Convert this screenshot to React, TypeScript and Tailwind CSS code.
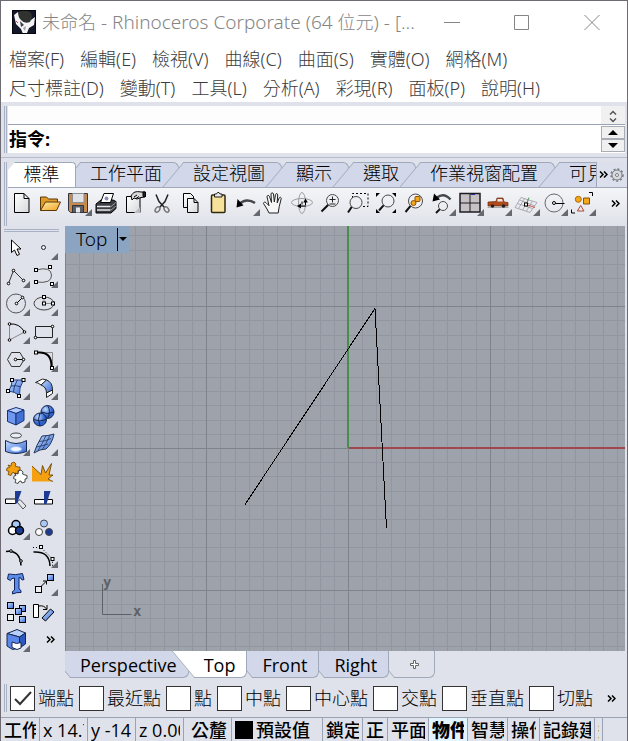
import React, { useState } from "react";

const STACK = "font-['Open_Sans','Noto_Sans_CJK_TC',sans-serif]";

const Tri = () => <path d="M28 20v7h-7z" fill="#66696f" />;

function Pt({ x, y, sq = false }: { x: number; y: number; sq?: boolean }) {
  return sq ? (
    <rect x={x - 1.5} y={y - 1.5} width="3" height="3" fill="#fff" stroke="#000" />
  ) : (
    <circle cx={x} cy={y} r="1.3" fill="#fff" stroke="#000" />
  );
}

function Lens({ x, y, r, hx, hy }: { x: number; y: number; r: number; hx: number; hy: number }) {
  const k = r * 0.7;
  return (
    <g>
      <path d={`M${x - k} ${y + k}L${hx} ${hy}`} stroke="#111" strokeWidth="2" />
      <circle cx={x} cy={y} r={r} fill="#eef0f4" fillOpacity=".6" stroke="#4a4a4a" />
    </g>
  );
}

function Chip({ x, y, fill = "url(#blue)" }: { x: number; y: number; fill?: string }) {
  return <rect x={x} y={y} width="6" height="6" fill={fill} stroke="#000" />;
}

type Tool = { name: string; art: React.ReactNode; more?: boolean };

const toolbar: Tool[] = [
  { name: "新增", art: <path d="M6.5 4.5h9.500l5 5v14h-14.500zM16 4.500v5h5" fill="url(#paper)" stroke="#000" /> },
  {
    name: "開啟",
    art: (
      <g stroke="#5a3808" strokeLinejoin="round">
        <path d="M4.500 21.500v-13.500h6l2 2h9v4" fill="#e09a28" />
        <path d="M4.500 21.500l5-8.500h15l-4 8.500z" fill="url(#gold)" />
      </g>
    ),
  },
  {
    name: "儲存",
    more: true,
    art: (
      <g stroke="#30343c">
        <path d="M4.500 4.500h19v19h-17l-2-2z" fill="#c68a4c" />
        <path d="M8.500 4.500h11.500v9h-11.500z" fill="#dfe2e6" stroke="#8a8d92" />
        <path d="M8.500 16.500h11v7h-11z" fill="#5a5e66" />
        <path d="M12 18.500h4v5h-4z" fill="#e6e8ea" stroke="none" />
      </g>
    ),
  },
  {
    name: "列印",
    art: (
      <g stroke="#000" strokeLinejoin="round">
        <path d="M4 15l5-4h12l3 1.500v7l-5 4.500h-15z" fill="#3a3d43" />
        <path d="M5 17.500h13.500M5 21h13.500" stroke="#e8e8e8" fill="none" strokeWidth="1.500" />
        <path d="M19 17.500l5-4M19 21l5-4" stroke="#999" fill="none" />
        <path d="M8.500 13.500l3.500-9h9.500l-3 9z" fill="#fff" />
        <circle cx="14.500" cy="9.500" r="2" fill="#8b8fb0" stroke="none" />
      </g>
    ),
  },
  {
    name: "內容",
    art: (
      <g stroke="#000" strokeLinejoin="round">
        <path d="M6.500 7.500h13.500v16h-13.500z" fill="url(#paper)" />
        <path d="M20 18l-6 6h6z" fill="#b8bbc0" stroke="none" />
        <path d="M11 7c2-4 5-5 10-4h4v5l-4 .5-4 1.500-3-1-2 2z" fill="#d9d9d9" />
        <path d="M23 3h2.500v4.500h-2.500z" fill="#22252b" />
        <path d="M14 8l3-2M16 9.500l3-2" fill="none" />
      </g>
    ),
  },
  {
    name: "剪下",
    art: (
      <g fill="none" stroke="#44474d" strokeWidth="1.500">
        <path d="M8 5.500l3 7 5.500 6M20 5.500l-3 7-5.500 6" stroke="#222" />
        <ellipse cx="9.500" cy="20.500" rx="2" ry="3" transform="rotate(35 9.500 20.500)" stroke="#777" />
        <ellipse cx="18.500" cy="20.500" rx="2" ry="3" transform="rotate(-35 18.500 20.500)" stroke="#777" />
      </g>
    ),
  },
  {
    name: "複製",
    art: (
      <g fill="url(#paper)" stroke="#000">
        <path d="M7.500 4.500h7l3 3v11h-10z" />
        <path d="M11.500 9.500h6.500l4 4v10h-10.500zM18 9.500v4h4" />
      </g>
    ),
  },
  {
    name: "貼上",
    art: (
      <g stroke="#3c3016">
        <rect x="7.500" y="6" width="13.500" height="17.500" rx="1" fill="#f6e29a" stroke="#30280f" strokeWidth="1.500" />
        <path d="M10.500 8v-3h2l1-1.500h1.500l1 1.500h2v3z" fill="#e8e8e8" stroke="#222" />
      </g>
    ),
  },
  {
    name: "復原",
    more: true,
    art: (
      <g>
        <path d="M8 14.500c4-4 10-4 15-.5" fill="none" stroke="#44474d" strokeWidth="2.500" />
        <path d="M4.500 18.500l1-8.500 6 6.500z" fill="#000" />
      </g>
    ),
  },
  {
    name: "平移",
    art: (
      <path
        d="M9 24l-2-4-3.500-5.500c0-1.500 1.500-1.700 2.500-.8l3 3-2-9c0-1.500 2-1.800 2.500-.2l2 6-.5-8.500c0-1.500 2.300-1.500 2.500 0l.8 8 1.200-7.500c.3-1.400 2.300-1 2.200.4l-.5 8 2-5c.6-1.300 2.300-.6 2 .8l-2 8-1 6.300z"
        fill="#f6f6f6"
        stroke="#222"
        strokeLinejoin="round"
      />
    ),
  },
  {
    name: "旋轉視圖",
    art: (
      <g fill="none" stroke="#9a9da2">
        <ellipse cx="14" cy="13.500" rx="10.500" ry="4" />
        <ellipse cx="14" cy="14" rx="3.500" ry="10.500" />
        <path d="M12 17h6M17.500 12v4M14 12.500v3" stroke="#000" />
        <path d="M9 17l4-2.500v5zM17.500 9.500l-2.200 4h4.500z" fill="#000" stroke="none" />
      </g>
    ),
  },
  {
    name: "縮放",
    art: (
      <g>
        <Lens x={16.500} y={11.500} r={6} hx={5.500} hy={22.500} />
        <path d="M13.500 10.500h6M16.500 7.500v6M13.500 15h6" stroke="#222" fill="none" />
      </g>
    ),
  },
  {
    name: "框選縮放",
    art: (
      <g>
        <path d="M8.500 9v-4.500h15.500v13h-5" fill="none" stroke="#000" strokeDasharray="2 2" />
        <Lens x={12} y={13.500} r={6} hx={4} hy={23.500} />
      </g>
    ),
  },
  {
    name: "縮放至最大範圍",
    art: (
      <g>
        <Lens x={16} y={12} r={6} hx={7} hy={21.500} />
        <path d="M4 4h4l-4 4zM24 4h-4l4 4zM4 24h4l-4-4zM24 24h-4l4-4z" fill="#000" />
      </g>
    ),
  },
  {
    name: "縮放至選取物件",
    art: (
      <g>
        <Lens x={15.500} y={12} r={7} hx={5.500} hy={23} />
        <rect x="15" y="7.500" width="5" height="5" rx="1" fill="#f5a81c" stroke="#8a5200" />
        <circle cx="13.500" cy="14" r="2.500" fill="#f5a81c" stroke="#8a5200" />
      </g>
    ),
  },
  {
    name: "復原視圖",
    more: true,
    art: (
      <g>
        <path d="M9 8.500c4-3 9-3 13.500 2" fill="none" stroke="#44474d" strokeWidth="2.500" />
        <path d="M4.500 12.500l1.500-8 6 6z" fill="#000" />
        <Lens x={15} y={17} r={4.500} hx={8} hy={24} />
      </g>
    ),
  },
  {
    name: "四個作業視窗",
    more: true,
    art: (
      <g>
        <rect x="4" y="4.500" width="20" height="18.500" fill="#c6c2c4" stroke="#1c1c24" strokeWidth="1.500" />
        <path d="M14 4v19M4 14h20" stroke="#1c1c24" />
        <path d="M15 5.500h4" stroke="#2030a0" />
      </g>
    ),
  },
  {
    name: "著色",
    more: true,
    art: (
      <g>
        <path d="M3.500 18.500h21" stroke="#aaa" />
        <path d="M4 13l8-.5 1-3.500h6l1 4 4 .5v3.500h-20z" fill="#b04c1c" stroke="#6c2a0c" strokeWidth=".7" />
        <path d="M13.500 10h4.500l.8 2.500h-5.500z" fill="#e8e8ee" />
        <circle cx="8.500" cy="17" r="1.800" fill="#222" />
        <circle cx="19.500" cy="17" r="1.800" fill="#222" />
      </g>
    ),
  },
  {
    name: "工作平面",
    more: true,
    art: (
      <g fill="none" stroke="#989ba1" strokeWidth=".8">
        <path d="M9 8.500l-6 10 15 5 7-10zM12.500 9.500l-6 10M16.500 11l-6 10M20.500 12l-6 10M7.500 11l15.500 6M5.500 14.500l15 5" />
        <path d="M14 15.500l9 3" stroke="#c03a2a" />
        <path d="M14 15.500l3-7" stroke="#2a8a3a" />
        <rect x="12.500" y="14" width="3" height="3" fill="#fff" stroke="#000" strokeWidth="1" />
      </g>
    ),
  },
  {
    name: "物件鎖點",
    more: true,
    art: (
      <g fill="none" stroke="#66696f">
        <circle cx="14" cy="14" r="9" />
        <path d="M15 14.500h9.500" stroke="#000" />
        <circle cx="14" cy="14" r="1.500" fill="#fff" stroke="#000" />
      </g>
    ),
  },
  {
    name: "選取",
    more: true,
    art: (
      <g>
        <circle cx="10.300" cy="10.300" r="3" fill="#f5a81c" stroke="#b06a00" />
        <path d="M15.500 9h6v6h-6z" fill="#f5a81c" stroke="#8a5200" />
        <path d="M12.700 16.500l3.300 5.500h-6.600z" fill="none" stroke="#b04a2a" />
        <path d="M21 3.500h3.500v3.500M3.500 20.500v3.500h3.500" fill="none" stroke="#000" />
      </g>
    ),
  },
];

const sidebar: Tool[] = [
  { name: "選取物件", art: <path d="M9.500 7v12.500l3-2.500 2.500 5.500 2.500-1.200-2.500-5.300h4z" fill="#fff" stroke="#000" /> },
  { name: "點", more: true, art: <circle cx="13.500" cy="14.500" r="2" fill="#eef" stroke="#222" /> },
  {
    name: "多重直線",
    more: true,
    art: (
      <g>
        <path d="M6.500 22.500l5-13 10 10" fill="none" stroke="#333" />
        <Pt x={6.500} y={22.500} />
        <Pt x={11.500} y={9.500} />
        <Pt x={21.500} y={19.500} />
      </g>
    ),
  },
  {
    name: "控制點曲線",
    more: true,
    art: (
      <g>
        <path d="M6 9q15-4 15.500 5t-15.500 7" fill="none" stroke="#555" />
        <Pt x={6} y={9} sq />
        <Pt x={20} y={6} sq />
        <Pt x={6} y={21} sq />
        <Pt x={22} y={23} sq />
      </g>
    ),
  },
  {
    name: "圓",
    more: true,
    art: (
      <g>
        <circle cx="14" cy="14.500" r="9.500" fill="none" stroke="#555" />
        <path d="M14.500 14.500l6-6" stroke="#000" />
        <Pt x={14.500} y={14.500} />
        <Pt x={20.500} y={8.500} />
      </g>
    ),
  },
  {
    name: "橢圓",
    more: true,
    art: (
      <g>
        <ellipse cx="14" cy="14.500" rx="10" ry="6.500" fill="none" stroke="#444" />
        <path d="M14 8v6.500h9" fill="none" stroke="#888" />
        <Pt x={14} y={8} sq />
        <Pt x={14} y={14.500} sq />
        <Pt x={23} y={14.500} sq />
      </g>
    ),
  },
  {
    name: "圓弧",
    more: true,
    art: (
      <g>
        <path d="M7.500 7v16l15-8" fill="none" stroke="#888" />
        <path d="M7.500 7q10-1 15 8" fill="none" stroke="#000" />
        <Pt x={7.500} y={7} />
        <Pt x={22.500} y={15} />
        <Pt x={7.500} y={23} />
      </g>
    ),
  },
  {
    name: "矩形",
    more: true,
    art: (
      <g>
        <path d="M5.500 9.500h17v11h-17z" fill="none" stroke="#222" />
        <Pt x={22.500} y={9.500} />
        <Pt x={5.500} y={20.500} />
      </g>
    ),
  },
  {
    name: "多邊形",
    more: true,
    art: (
      <g>
        <path d="M5.500 14.500l4-7h8.500l4 7-4 7h-8.500z" fill="none" stroke="#333" />
        <path d="M14 14.500h8" stroke="#000" />
        <Pt x={13.500} y={14.500} />
        <Pt x={21.500} y={14.500} />
      </g>
    ),
  },
  {
    name: "曲線圓角",
    more: true,
    art: (
      <g fill="none">
        <path d="M8 7.500h14.500v13" stroke="#888" />
        <path d="M8 7.500q14-1 13.500 15" stroke="#000" strokeWidth="2" />
        <Pt x={6} y={7.500} sq />
        <Pt x={22} y={23} sq />
      </g>
    ),
  },
  {
    name: "曲面",
    more: true,
    art: (
      <g>
        <path d="M10 7h11.500q-5 8-4 15.500-5-4-11-4.500 4-5 3.500-11z" fill="url(#blue)" stroke="#24407c" />
        <path d="M15.500 7q-4 6-4 12M8.500 13q6-1 10.500 1" fill="none" stroke="#24407c" />
        <Pt x={10} y={7} sq />
        <Pt x={21.500} y={7} sq />
        <Pt x={6} y={18} sq />
        <Pt x={17} y={23} sq />
      </g>
    ),
  },
  {
    name: "曲面圓角",
    more: true,
    art: (
      <g stroke="#222" strokeLinejoin="round">
        <path d="M5.500 9.500l7-3.500 4 1-5.500 5q-3-2.500-5.500-2.500z" fill="#fff" />
        <path d="M16.500 7q6 2 6 10l-6 3q0-6-5.500-8z" fill="url(#blue)" />
        <path d="M22.500 17v3.500l-6 4v-4.500z" fill="#fff" />
      </g>
    ),
  },
  {
    name: "立方體",
    more: true,
    art: (
      <g stroke="#16307c" strokeLinejoin="round">
        <path d="M5.500 9.500l8.500-3 8 2.500-8 3.500z" fill="#b4cdfa" />
        <path d="M5.500 9.500l8.500 3v11.500l-8.500-3.500z" fill="#6f97ee" />
        <path d="M14 12.500l8-3.500v10.500l-8 4.500z" fill="#4470d4" />
      </g>
    ),
  },
  {
    name: "球體",
    more: true,
    art: (
      <g stroke="#16264c" fill="url(#ball)">
        <circle cx="17.500" cy="11" r="6.500" />
        <path d="M11 11q6 3 13 0M17.500 4.500q4 6 0 13" fill="none" />
        <circle cx="10" cy="18.500" r="6.500" />
        <path d="M3.500 18.500q6 3 13 0M10 12q-3 6 0 13" fill="none" />
      </g>
    ),
  },
  {
    name: "投影曲線",
    more: true,
    art: (
      <g>
        <ellipse cx="14" cy="6.500" rx="5.500" ry="2.500" fill="#e8edf8" stroke="#444" />
        <path d="M3.500 11.500q10.500 6 21 0v11q-10.500 4-21 0z" fill="url(#blue)" stroke="#16264c" />
        <ellipse cx="14" cy="20" rx="5.500" ry="2.500" fill="#f4f7ff" stroke="#9ac0fa" />
      </g>
    ),
  },
  {
    name: "網格曲面",
    more: true,
    art: (
      <g stroke="#26365c">
        <path d="M12 7q6 0 12-2-2 10-8 15-6 0-12 4 2-7 8-17z" fill="url(#blue)" />
        <path d="M9 12.500q6 0 12-3M6 18q6-1 12-3M16 6.500q-4 9-8 15M20 6q-4 9-8 15" fill="none" strokeWidth=".8" />
      </g>
    ),
  },
  {
    name: "組合",
    art: (
      <g strokeLinejoin="round" strokeWidth=".8">
        <path
          d="M6 8l3 1 .5-3 2.500-1 2 2-1 2 3 1 2 0 0 3-2 .5 0 3-3 1-1-2-2 .5-1 2.500-3-1 1-3-2.500-1 .5-2.500 2.500-.5z"
          fill="#f5a010"
          stroke="#6c4200"
        />
        <path
          d="M13 16l3 1 .5-3 2.500-1 2 2-.5 2 2.500 1 2 .5 0 3-2 .5 0 3-3 1-1-2-2 .5-1 2-3-1 1-3-2.500-1 .5-2.500 2-.5z"
          fill="#fff"
          stroke="#222"
        />
      </g>
    ),
  },
  {
    name: "炸開",
    art: (
      <g>
        <path d="M2 9l9 8.500 1.500-9 3 7.500 6-9.500-2.500 11.500 4 0-5 4 5 2.500H2z" fill="#f5a010" />
        <path d="M2 9l9 8.500 1.500-9 3 7.500 6-9.500-2.500 11.500 4 0-5 4 5 2.500" fill="none" stroke="#5c3a00" strokeWidth=".8" />
      </g>
    ),
  },
  {
    name: "修剪",
    art: (
      <g>
        <path d="M3.500 14h10v4.500h-10z" fill="#fff" stroke="#000" />
        <path d="M15 17l3-2.500 6 6.500-3 3z" fill="#e6e6ea" stroke="#555" />
        <path d="M13 6h6.500l-4.500 12.500h-2z" fill="#1c3a94" />
      </g>
    ),
  },
  {
    name: "分割",
    art: (
      <g>
        <path d="M4.500 14.500h18v4.500h-18z" fill="#fff" stroke="#000" />
        <path d="M14 6h6.500l-4 13h-2.500z" fill="#1c3a94" />
      </g>
    ),
  },
  {
    name: "群組",
    more: true,
    art: (
      <g stroke="#000" strokeWidth="1.500">
        <circle cx="14" cy="11.500" r="4" fill="#a8c8fa" />
        <circle cx="10.500" cy="17.500" r="4" fill="#fff" />
        <circle cx="17.500" cy="17.500" r="4" fill="#1c3a94" />
      </g>
    ),
  },
  {
    name: "解散群組",
    art: (
      <g stroke="#444">
        <circle cx="14" cy="10.500" r="3.500" fill="#a8c8fa" />
        <circle cx="9" cy="19" r="3.500" fill="#fff" />
        <circle cx="19" cy="19" r="3.500" fill="#1c3a94" />
      </g>
    ),
  },
  {
    name: "編輯點",
    art: (
      <g>
        <path d="M4 10.500q14-2 15 14" fill="none" stroke="#000" strokeWidth="1.500" />
        <Pt x={9} y={10} />
        <Pt x={19} y={20} />
      </g>
    ),
  },
  {
    name: "控制點",
    more: true,
    art: (
      <g fill="none">
        <path d="M3.500 11q16-1 16.500 14" stroke="#000" strokeWidth="1.500" />
        <path d="M3 6.500h8l11.500 11.500v7" stroke="#000" strokeDasharray="1 2" />
        <Pt x={11} y={6} sq />
        <Pt x={22.500} y={18} sq />
      </g>
    ),
  },
  {
    name: "文字",
    art: (
      <path
        d="M5.500 10l1-5q7 1.500 14-.5l1.500 6-2 .5q-.5-2.500-3-2.500v11.500l2 1.500v2q-4-.5-8.500 1.500v-2.500l2-1.500v-12q-3.500 0-4 2.500z"
        fill="#5c8cea"
        stroke="#10245c"
      />
    ),
  },
  {
    name: "移動",
    more: true,
    art: (
      <g>
        <Chip x={5.500} y={17.500} fill="#eee" />
        <Chip x={17.500} y={5.500} />
        <path d="M11 17.500l6-6M13 12h3.500v3.500" fill="none" stroke="#000" />
      </g>
    ),
  },
  {
    name: "陣列",
    art: (
      <g>
        <Chip x={5.500} y={5.500} />
        <Chip x={17.500} y={8.500} />
        <Chip x={13.500} y={11.500} />
        <Chip x={5.500} y={17.500} fill="#eef2ee" />
        <Chip x={17.500} y={19.500} />
      </g>
    ),
  },
  {
    name: "旋轉",
    art: (
      <g>
        <path d="M3.500 7.500h5v13h-5z" fill="#fff" stroke="#000" />
        <path d="M9 9q5-1 7.500 3M17 8v4.500h-4" fill="none" stroke="#000" />
        <path d="M12 21l8.500-9 3.500 3-8.500 9z" fill="url(#blue)" stroke="#000" />
      </g>
    ),
  },
  {
    name: "實體工具",
    more: true,
    art: (
      <g stroke="#16264c" strokeLinejoin="round">
        <path d="M5 8.500l10-4 8.500 3.500-6 4z" fill="#b4d0fa" />
        <path d="M5 8.500l12.500 3.500v11l-7 1.500-5.500-3.500z" fill="#5c88ea" />
        <path d="M17.500 12l6-4v11l-6 4z" fill="#2c58c0" />
        <path d="M10 17l4.500 1.500 4.500-1v5.500l-4 1.500-5-2z" fill="#fff" />
      </g>
    ),
  },
];

function ToolButton({ tool }: { tool: Tool }) {
  return (
    <button type="button" aria-label={tool.name} className="h-7 w-7 shrink-0">
      <svg viewBox="0 0 28 28" className="block h-7 w-7" aria-hidden="true">
        {tool.art}
        {tool.more && <Tri />}
      </svg>
    </button>
  );
}

const More = () => (
  <svg viewBox="0 0 9 7" className="h-[7px] w-[9px]" fill="none" stroke="#000" strokeWidth="1.500" aria-hidden="true">
    <path d="M1 .5l3 3-3 3M5 .5l3 3-3 3" />
  </svg>
);

const GripV = () => <div className="w-[3px] shrink-0 border-x border-[#a9b2c4]" />;

const menus = [
  ["檔案(F)", "編輯(E)", "檢視(V)", "曲線(C)", "曲面(S)", "實體(O)", "網格(M)"],
  ["尺寸標註(D)", "變動(T)", "工具(L)", "分析(A)", "彩現(R)", "面板(P)", "說明(H)"],
];

const ribbonTabs = ["工作平面", "設定視圖", "顯示", "選取", "作業視窗配置", "可見"];

const viewTabs = [
  { name: "Perspective", z: "z-30" },
  { name: "Top", z: "z-40" },
  { name: "Front", z: "z-20" },
  { name: "Right", z: "z-10" },
];

const snaps = ["端點", "最近點", "點", "中點", "中心點", "交點", "垂直點", "切點"];

const status = [
  { t: "工作", w: "w-[39px] font-medium" },
  { t: "x 14.7", w: "w-12" },
  { t: "y -14.", w: "w-12" },
  { t: "z 0.00", w: "w-12" },
  { t: "公釐", w: "w-12 pl-[7px] font-medium" },
  { t: "預設值", w: "w-[91px] font-medium", swatch: true },
  { t: "鎖定", w: "w-10 font-medium" },
  { t: "正", w: "w-[25px] font-medium" },
  { t: "平面", w: "w-[41px] font-medium" },
  { t: "物件", w: "w-[39px] bg-[#e2f4ff] font-black" },
  { t: "智慧", w: "w-10 font-medium" },
  { t: "操作", w: "w-8 font-medium" },
  { t: "記錄建", w: "w-[55px] font-medium" },
  { t: "過", w: "w-2 font-medium" },
];

function Viewport() {
  const minor: string[] = [];
  const major: string[] = [];
  for (let i = -20; i <= 19; i++) {
    const x = Math.round(283 + i * 14.17) + 0.5;
    (i % 10 === 0 ? major : minor).push(`M${x} 0V425`);
  }
  for (let i = -15; i <= 14; i++) {
    const y = Math.round(222 + i * 14.17) + 0.5;
    (i % 10 === 0 ? major : minor).push(`M0 ${y}H560`);
  }
  return (
    <svg width="560" height="425" className="block" role="img" aria-label="Top">
      <path d={minor.join("")} stroke="#9196a0" fill="none" />
      <path d={major.join("")} stroke="#7f838b" fill="none" />
      <path d="M283 0V222" stroke="#498e4e" strokeWidth="2" />
      <path d="M284 222H560" stroke="#9e474c" strokeWidth="2" />
      <path d="M180 278.500L310 82.500L321.500 302" stroke="#000" fill="none" shapeRendering="crispEdges" />
      <path d="M37.500 358v30.500h29" stroke="#5d6066" fill="none" />
      <text x="38" y="361" fill="#5d6066" className="font-['DejaVu_Sans_Mono',monospace] text-[14px] font-bold">y</text>
      <text x="68" y="390" fill="#5d6066" className="font-['DejaVu_Sans_Mono',monospace] text-[14px] font-bold">x</text>
    </svg>
  );
}

export default function App() {
  const [on, setOn] = useState<Record<string, boolean>>({ 端點: true });
  return (
    <div className={`${STACK} overflow-hidden border-x border-t border-[#6e6c72] bg-[#dfe2ea] text-lg leading-6 text-black`}>
      <svg width="0" height="0" className="absolute" aria-hidden="true">
        <defs>
          <linearGradient id="blue" x1="0" y1="0" x2="1" y2="1">
            <stop offset="0" stopColor="#c4dcff" />
            <stop offset="1" stopColor="#3568d4" />
          </linearGradient>
          <linearGradient id="gold" x1="0" y1="0" x2="1" y2="1">
            <stop offset="0" stopColor="#fff0a8" />
            <stop offset="1" stopColor="#f0a020" />
          </linearGradient>
          <linearGradient id="paper" x1="0" y1="0" x2="1" y2="1">
            <stop offset="0" stopColor="#fff" />
            <stop offset="1" stopColor="#d6d8dc" />
          </linearGradient>
          <radialGradient id="ball" cx=".35" cy=".3">
            <stop offset="0" stopColor="#c0dcff" />
            <stop offset="1" stopColor="#2c60cc" />
          </radialGradient>
        </defs>
      </svg>

      <header className="flex h-[42px] items-center bg-white pl-[11px]">
        <svg viewBox="0 0 24 24" className="h-6 w-6 shrink-0" aria-hidden="true">
          <path d="M0 0h24v24H0z" fill="#14162a" />
          <path d="M2 5l4-3 12 1 1 7 4-3-1 8-5 3-2 5-4 1-2-5-5-5z" fill="#f4f4f6" />
          <path d="M6 2q9-3 13 1 2 4-1 9-6 2-9-2-3-3-3-8z" fill="#30322f" />
          <path d="M8 11l4 4-3 2z" fill="#3c3e46" />
          <path d="M14 16l-1 5-2-3z" fill="#a0a2a8" />
          <path d="M4 11l2 2" stroke="#c05050" />
          <path d="M.5.5h23v23H.5z" fill="none" stroke="#05060c" />
        </svg>
        <h1 className="ml-[6px] min-w-0 flex-1 truncate font-['Noto_Sans','Noto_Sans_CJK_TC',sans-serif] font-light text-[#858585]">
          未命名<span className="text-[19px]"> - Rhinoceros Corporate (64 </span>位元<span className="text-[19px]">) - [...</span>
        </h1>
        <div className="flex shrink-0 text-[#858585]">
          <button type="button" aria-label="最小化" className="grid h-10 w-[70px] place-items-center">
            <svg viewBox="0 0 16 16" className="h-4 w-4" stroke="currentColor" fill="none"><path d="M0 8.500h16" /></svg>
          </button>
          <button type="button" aria-label="最大化" className="grid h-10 w-[70px] place-items-center">
            <svg viewBox="0 0 16 16" className="h-4 w-4" stroke="currentColor" fill="none"><path d="M.5 1.500h14v14H.5z" /></svg>
          </button>
          <button type="button" aria-label="關閉" className="grid h-10 w-[70px] place-items-center">
            <svg viewBox="0 0 16 16" className="h-4 w-4" stroke="currentColor" fill="none"><path d="M.5 1l15 15M15.500 1l-15 15" /></svg>
          </button>
        </div>
      </header>

      <nav className="bg-white px-2 pt-px font-['Noto_Sans','Noto_Sans_CJK_TC',sans-serif] font-light text-[#3c3c3c]">
        {menus.map((row, i) => (
          <div key={i} className="flex h-[29px] gap-4">
            {row.map((m) => (
              <button type="button" key={m} className="whitespace-nowrap">{m}</button>
            ))}
          </div>
        ))}
      </nav>

      <section className="mt-1 flex gap-px border-b border-[#b4bccb] pb-1 pl-[3px] pr-[2px]">
        <GripV />
        <div className="min-w-0 flex-1">
          <div className="flex h-[19px] justify-end border-b border-[#9aa3b3] bg-[#fdfdfd]">
            <div className="flex w-6 flex-col items-center justify-between bg-[#f0f0f0] pb-px pt-1">
              <svg viewBox="0 0 8 5" className="h-[5px] w-2" fill="none" stroke="#555" strokeWidth="1.500"><path d="M1 4.500l3-3 3 3" /></svg>
              <svg viewBox="0 0 8 5" className="h-[5px] w-2" fill="none" stroke="#555" strokeWidth="1.500"><path d="M1 .5l3 3 3-3" /></svg>
            </div>
          </div>
          <div className="flex h-7 items-center bg-white">
            <label htmlFor="command" className="pl-px font-bold">指令:</label>
            <input id="command" type="text" className="min-w-0 flex-1 px-1 outline-none" />
            <div className="flex w-6 flex-col">
              <button type="button" aria-label="上一個" className="grid h-[13px] place-items-center border border-[#a9adb5] bg-[#f0f0f0]">
                <svg viewBox="0 0 10 5" className="h-[5px] w-[10px]"><path d="M5 0l5 5H0z" /></svg>
              </button>
              <button type="button" aria-label="下一個" className="grid h-[13px] place-items-center border border-[#a9adb5] bg-[#f0f0f0]">
                <svg viewBox="0 0 10 5" className="h-[5px] w-[10px]"><path d="M0 0h10L5 5z" /></svg>
              </button>
            </div>
          </div>
        </div>
      </section>

      <section className="flex gap-px pl-[3px] pt-1">
        <GripV />
        <div className="min-w-0 flex-1">
          <div className="relative flex h-[26px] overflow-hidden border-b border-[#a0a9ba]">
            <button type="button" className="relative z-10 h-[26px] w-[68px] shrink-0 rounded-tr border-r border-t border-[#a0a9ba] bg-white pb-1 font-light leading-5 [clip-path:polygon(0_8px,7px_0,100%_0,100%_100%,0_100%)]">
              標準
            </button>
            {ribbonTabs.map((t) => (
              <button
                type="button"
                key={t}
                className="relative h-[25px] shrink-0 pb-1 pl-[14px] pr-[17px] font-light leading-5 before:absolute before:-left-[6px] before:right-6 before:top-0 before:h-[25px] before:-skew-x-40 before:border-l before:border-t before:border-[#a0a9ba] before:bg-[#d2d8ea] after:absolute after:left-5 after:right-0 after:top-0 after:h-[25px] after:rounded-tr-md after:border-r after:border-t after:border-[#a0a9ba] after:bg-[#d2d8ea]"
              >
                <span className="relative z-10">{t}</span>
              </button>
            ))}
            <div className="absolute right-0 top-0 z-20 flex h-[25px] w-[31px] items-center gap-[2px] border-l border-[#a0a9ba] bg-[#dce0ec] pl-[2px]">
              <button type="button" aria-label="更多標籤"><More /></button>
              <button type="button" aria-label="選項">
                <svg viewBox="0 0 14 14" className="h-[14px] w-[14px]">
                  <circle cx="7" cy="7" r="6" fill="none" stroke="#777a80" strokeWidth="1.500" strokeDasharray="2 2" />
                  <circle cx="7" cy="7" r="5" fill="#d8dade" stroke="#777a80" />
                  <circle cx="7" cy="7" r="1.500" fill="#fff" stroke="#777a80" />
                </svg>
              </button>
            </div>
          </div>
          <div className="flex h-[38px] items-start bg-linear-to-b from-[#f4f5f7] to-[#dfe2ea] pt-px">
            {toolbar.map((t) => <ToolButton key={t.name} tool={t} />)}
            <button type="button" aria-label="更多工具" className="ml-[15px] grid h-7 place-items-center"><More /></button>
          </div>
        </div>
      </section>

      <div className="flex">
        <aside className="-mb-[2px] w-16 shrink-0 pl-px pt-[3px]">
          <div className="ml-[2px] h-[3px] w-[55px] border-y border-[#a9b2c4]" />
          <div className="mt-px grid grid-cols-[28px_28px]">
            {sidebar.map((t) => <ToolButton key={t.name} tool={t} />)}
            <button type="button" aria-label="更多" className="grid h-7 place-items-center pl-3"><More /></button>
          </div>
        </aside>
        <main className="relative mr-[2px] h-[425px] min-w-0 flex-1 overflow-hidden bg-[#9ea3ab]">
          <Viewport />
          <button type="button" className="absolute left-0 top-0 flex h-[27px] w-16 items-center bg-[#8aa4c2] pb-px pl-[11px] font-['Noto_Sans',sans-serif] text-[19px] font-light">
            Top
            <span className="ml-[10px] h-[23px] w-px bg-black" />
            <svg viewBox="0 0 8 4" className="ml-px h-1 w-2"><path d="M0 0h8L4 4z" /></svg>
          </button>
        </main>
      </div>

      <div className="isolate ml-16 flex h-7 overflow-hidden">
        {viewTabs.map((t) => (
          <button
            type="button"
            key={t.name}
            className={`relative ${t.z} h-[27px] shrink-0 pl-[15px] pr-3 leading-6 before:absolute before:-left-[6px] before:right-6 before:top-0 before:h-[27px] before:skew-x-40 before:border-b before:border-l before:border-[#a0a9ba] after:absolute after:left-4 after:right-0 after:top-0 after:h-[27px] after:rounded-br-md after:border-b after:border-r after:border-[#a0a9ba] ${
              t.name === "Top" ? "before:bg-white after:bg-white" : "before:bg-[#d2d8ea] after:bg-[#d2d8ea]"
            }`}
          >
            <span className="relative z-10">{t.name}</span>
          </button>
        ))}
        <button
          type="button"
          aria-label="新增視圖"
          className="relative grid h-[27px] w-[46px] place-items-center pl-1 before:absolute before:-left-[6px] before:right-6 before:top-0 before:h-[27px] before:skew-x-40 before:border-b before:border-l before:border-[#a0a9ba] after:absolute after:left-4 after:right-0 after:top-0 after:h-[27px] after:rounded-br-md after:border-b after:border-r after:border-[#a0a9ba]"
        >
          <svg viewBox="0 0 9 9" className="h-[9px] w-[9px]" fill="#fff" stroke="#666"><path d="M3.500.5h2v3h3v2h-3v3h-2v-3h-3v-2h3z" /></svg>
        </button>
      </div>

      <section className="flex h-[38px] items-center pl-[3px]">
        <div className="flex h-7"><GripV /></div>
        <div className="ml-[3px] flex gap-[5px]">
          {snaps.map((s) => (
            <label key={s} className="flex items-center gap-[3px] whitespace-nowrap font-light">
              <input
                type="checkbox"
                checked={!!on[s]}
                onChange={() => setOn({ ...on, [s]: !on[s] })}
                className="peer sr-only"
              />
              <span className="grid h-[25px] w-[25px] place-items-center border border-[#333] bg-white">
                {on[s] && (
                  <svg viewBox="0 0 20 20" className="h-5 w-5" fill="none" stroke="#333" strokeWidth="2"><path d="M2 11l5 5L18 4" /></svg>
                )}
              </span>
              <span>{s}</span>
            </label>
          ))}
        </div>
        <button type="button" aria-label="更多鎖點" className="ml-[14px]"><More /></button>
      </section>

      <footer className="flex h-[25px] border-t border-[#9aa3b3]">
        {status.map((s) => (
          <div key={s.t} className={`flex shrink-0 items-center border-r border-[#9aa3b3] px-[3px] ${s.w}`}>
            {s.swatch && <span className="mr-[3px] h-[18px] w-[18px] shrink-0 bg-black" />}
            <span className="overflow-hidden whitespace-nowrap">{s.t}</span>
          </div>
        ))}
      </footer>
    </div>
  );
}
